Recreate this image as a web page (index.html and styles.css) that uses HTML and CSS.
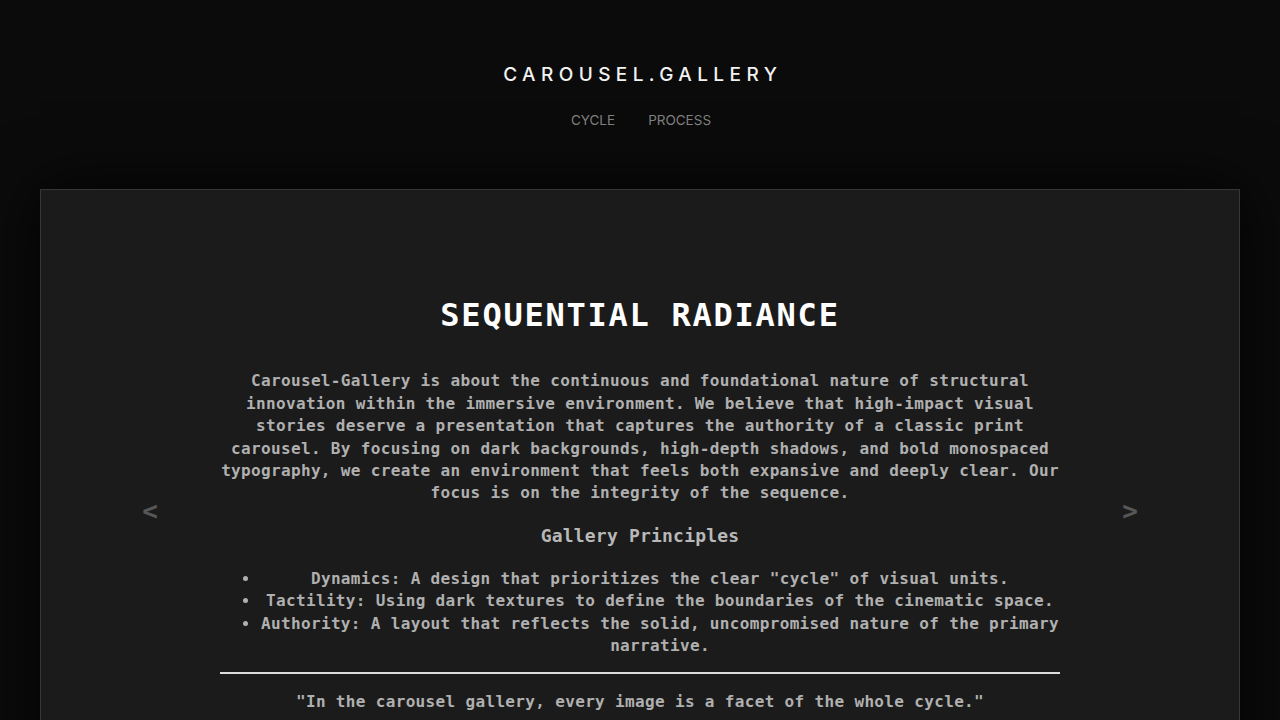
FILE: index.html
```html
<!DOCTYPE html>
<html lang="en">
<head>
<meta charset="utf-8">
<title>Carousel.Gallery</title>
<link rel="stylesheet" href="styles.css">
</head>
<body>
<header class="site-header">
  <div class="brand">CAROUSEL.GALLERY</div>
  <nav class="nav">
    <a href="#" class="nav-link">CYCLE</a>
    <a href="#" class="nav-link">PROCESS</a>
  </nav>
</header>
<main class="main">
  <section class="card">
    <button class="arrow" type="button">&lt;</button>
    <div class="content">
      <h2 class="title">SEQUENTIAL RADIANCE</h2>
      <p class="lead">Carousel-Gallery is about the continuous and foundational nature of structural innovation within the immersive environment. We believe that high-impact visual stories deserve a presentation that captures the authority of a classic print carousel. By focusing on dark backgrounds, high-depth shadows, and bold monospaced typography, we create an environment that feels both expansive and deeply clear. Our focus is on the integrity of the sequence.</p>
      <h3 class="subtitle">Gallery Principles</h3>
      <ul class="principles">
        <li>Dynamics: A design that prioritizes the clear "cycle" of visual units.</li>
        <li>Tactility: Using dark textures to define the boundaries of the cinematic space.</li>
        <li>Authority: A layout that reflects the solid, uncompromised nature of the primary narrative.</li>
      </ul>
      <hr class="rule">
      <p class="quote">"In the carousel gallery, every image is a facet of the whole cycle."</p>
    </div>
    <button class="arrow" type="button">&gt;</button>
  </section>
</main>
</body>
</html>
```

FILE: styles.css
```css
* { box-sizing: border-box; }
html, body { margin: 0; padding: 0; }
body {
  background: #0b0b0b;
  color: #b0b0b0;
  font-family: "DejaVu Sans Mono", "Liberation Mono", monospace;
}
.site-header {
  display: flex;
  flex-direction: column;
  align-items: center;
  padding-top: 63px;
  height: 189px;
}
.brand {
  font-family: "Inter", "Noto Sans", sans-serif;
  font-size: 19px;
  font-weight: 500;
  letter-spacing: 0.285em;
  margin-right: -0.285em;
  color: #f2f2f2;
  line-height: 24px;
}
.nav {
  display: flex;
  gap: 33px;
  margin-top: 24px;
  padding-left: 2px;
}
.nav-link {
  font-family: "Inter", "Noto Sans", sans-serif;
  font-size: 13.5px;
  color: #7f7f7f;
  text-decoration: none;
  line-height: 18px;
}
.main {
  padding: 0 40px;
}
.card {
  background: #1b1b1b;
  border: 1px solid #363636;
  box-shadow: 0 0 60px rgba(0, 0, 0, 0.85);
  display: flex;
  align-items: center;
  gap: 40px;
  padding: 106px 79px 60px;
}
.arrow {
  width: 60px;
  flex: none;
  background: none;
  border: none;
  color: #575757;
  font-family: "DejaVu Sans Mono", "Liberation Mono", monospace;
  font-weight: bold;
  font-size: 26px;
  padding: 0 0 3px;
  cursor: pointer;
}
.content {
  flex: 1;
  text-align: center;
  font-weight: bold;
  font-size: 16px;
  letter-spacing: 0.34px;
  line-height: 1.4;
}
.title {
  margin: 0 0 36px;
  font-size: 32px;
  line-height: 1.2;
  letter-spacing: 1.75px;
  color: #ffffff;
}
.lead {
  margin: 0 0 18px;
}
.subtitle {
  margin: 0 0 20px;
  font-size: 18px;
  letter-spacing: 0.2px;
  line-height: 1.4;
  color: #b8b8b8;
}
.principles {
  margin: 0 0 15px;
  padding-left: 40px;
}
.rule {
  margin: 0 0 17px;
  border: none;
  height: 2px;
  background: #dcdcdc;
}
.quote {
  margin: 0 0 15px;
}
```
